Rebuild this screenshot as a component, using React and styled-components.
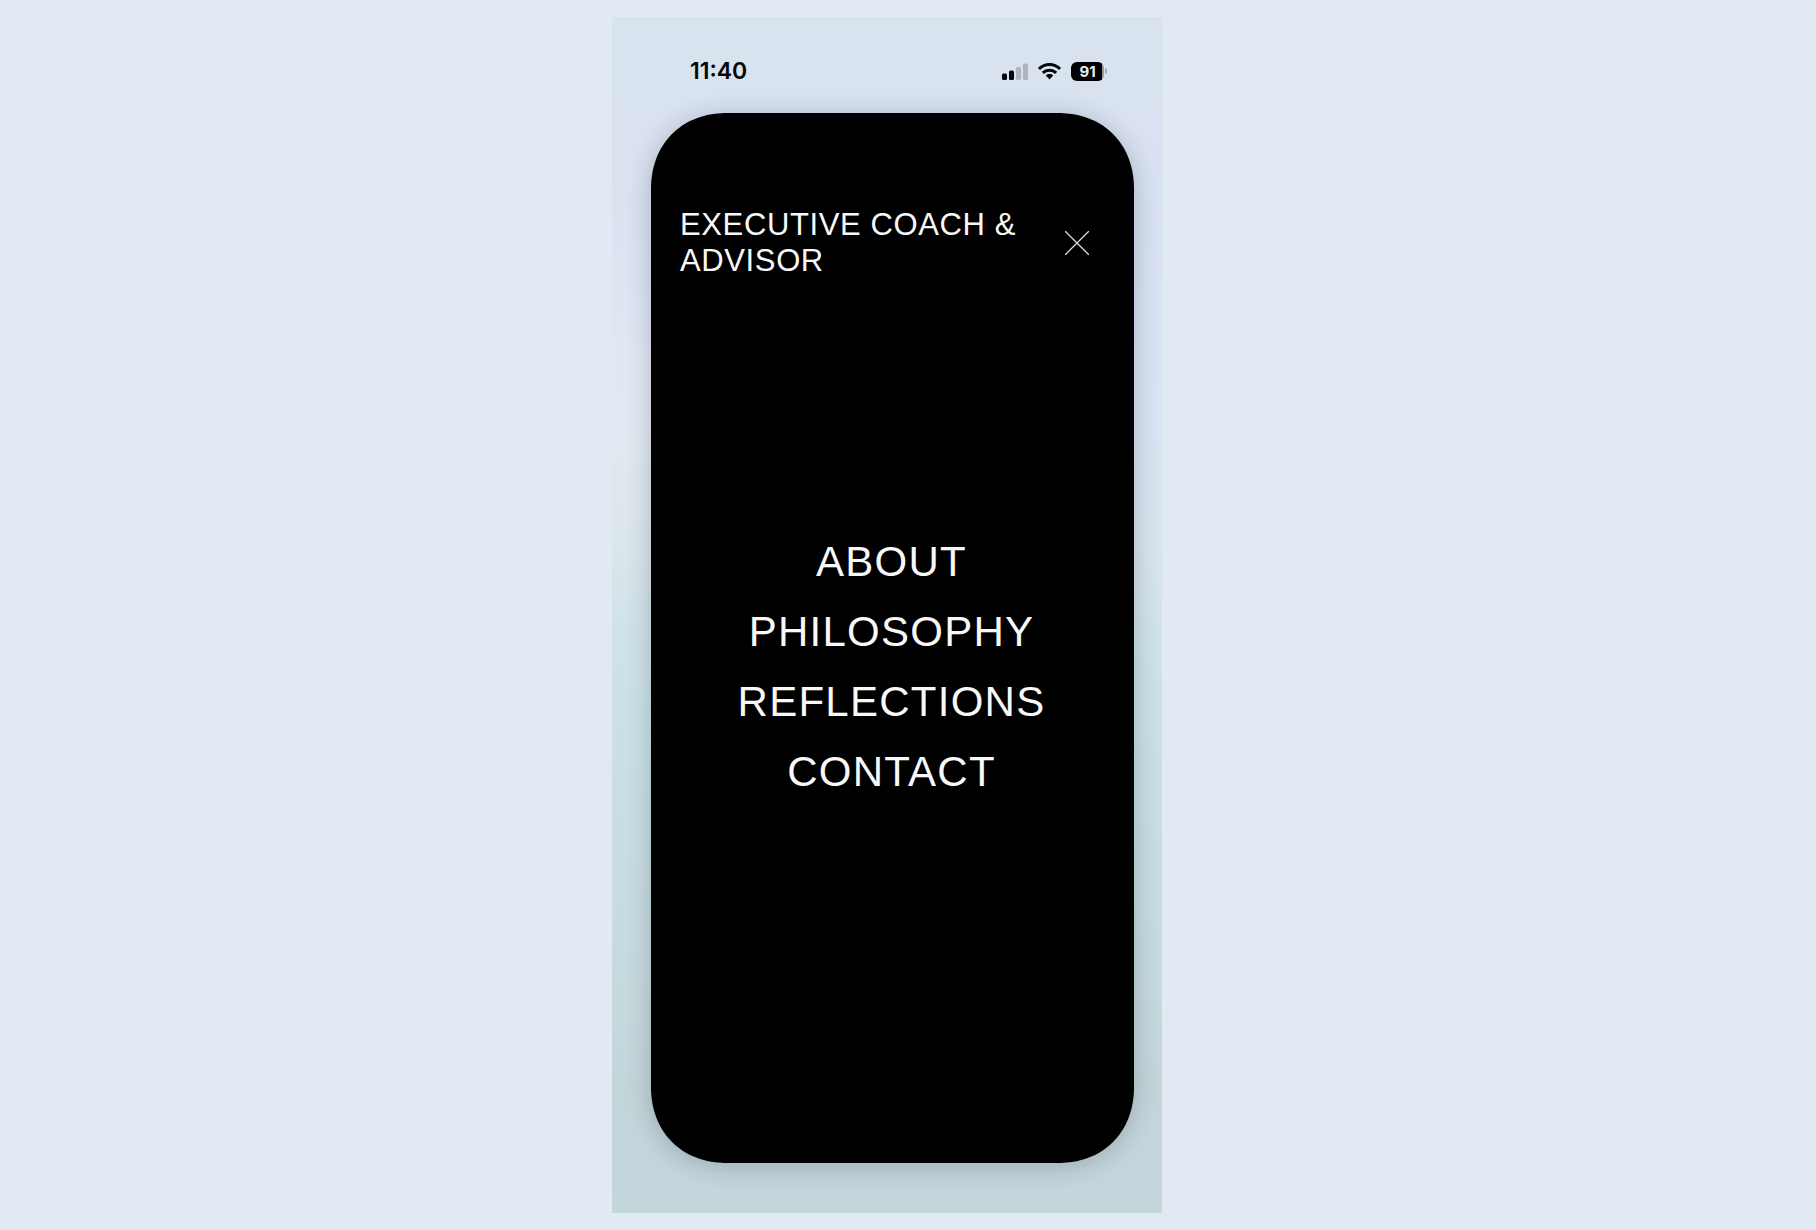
import React from "react";
import styled, { createGlobalStyle } from "styled-components";

const GlobalStyle = createGlobalStyle`
  *, *::before, *::after { box-sizing: border-box; }
  body {
    margin: 0;
    background: #e1e9f3;
    font-family: "Liberation Sans", Arial, sans-serif;
  }
`;

const Stage = styled.div`
  min-height: 100vh;
  display: flex;
  justify-content: center;
  align-items: stretch;
  padding: 17px 42px 17px 0;
`;

const Phone = styled.div`
  display: flex;
  flex-direction: column;
  width: 100%;
  max-width: 550px;
  padding: 0 28px 50px 39px;
  background:
    linear-gradient(180deg, transparent 10%, rgba(212, 224, 242, 0.6) 50%, rgba(212, 224, 242, 0.6) 75%, transparent 100%) right top / 50% 52% no-repeat,
    linear-gradient(
      180deg,
      #d9e2ef 0%,
      #dbe2f1 18%,
      #e1e7f3 28%,
      #e2e9f2 34%,
      #dbe6ea 44%,
      #cfe2e9 52%,
      #cae0e6 60%,
      #c6dbdf 78%,
      #c4d5da 90%,
      #c3d6da 100%
    );
`;

const StatusBar = styled.div`
  display: flex;
  align-items: center;
  justify-content: space-between;
  height: 96px;
  padding: 12px 27px 0 39px;
  color: #060709;
`;

const Time = styled.time`
  font: 600 23px/28px Inter, sans-serif;
`;

const Indicators = styled.div`
  display: flex;
  align-items: center;
  gap: 10px;
`;

const Battery = styled.div`
  display: flex;
  align-items: center;
  gap: 1px;
`;

const BatteryBody = styled.div`
  width: 33px;
  height: 19px;
  border-radius: 6px;
  background: linear-gradient(90deg, #000 31px, #94989f 31px);
  color: #e6ebf6;
  font: 700 15px/19px Inter, sans-serif;
  text-align: center;
`;

const BatteryTip = styled.div`
  width: 2px;
  height: 6px;
  border-radius: 0 2px 2px 0;
  background: #a3a8b3;
`;

const Card = styled.main`
  flex: 1;
  display: flex;
  flex-direction: column;
  padding: 94px 45px 108px 29px;
  border-radius: 70px;
  background: #000;
  color: #f8f8f8;
  box-shadow: 0 3px 24px rgba(20, 30, 50, 0.24);

  @supports (corner-shape: squircle) {
    border-radius: 76px;
    corner-shape: superellipse(1.1);
  }
`;

const Header = styled.header`
  display: flex;
  align-items: center;
  justify-content: space-between;
  gap: 24px;
`;

const Title = styled.h1`
  margin: 0;
  font-size: 31px;
  line-height: 36px;
  font-weight: 400;
  letter-spacing: 0.02em;
  text-transform: uppercase;
`;

const CloseButton = styled.button`
  flex: none;
  display: flex;
  width: 24px;
  height: 24px;
  padding: 0;
  border: 0;
  background: none;
  color: #dcdfdc;
  cursor: pointer;
`;

const Nav = styled.nav`
  flex: 1;
  display: flex;
  align-items: center;
  justify-content: center;
  padding-left: 14px;
`;

const NavList = styled.ul`
  margin: 0;
  padding: 0;
  list-style: none;
  text-align: center;
`;

const NavLink = styled.a`
  display: block;
  font-size: 42px;
  line-height: 70px;
  letter-spacing: 0.03em;
  text-transform: uppercase;
  text-decoration: none;
  color: inherit;
`;

const links = ["About", "Philosophy", "Reflections", "Contact"];

function SignalIcon() {
  return (
    <svg width="26" height="17" viewBox="0 0 26 17" role="img" aria-label="Signal strength">
      <rect x="0" y="10.500" width="5" height="6.500" rx="1.500" fill="#060709" />
      <rect x="7" y="7.500" width="5" height="9.500" rx="1.500" fill="#060709" />
      <rect x="14" y="4" width="5" height="13" rx="1.500" fill="#afb4c0" />
      <rect x="21" y="0.500" width="5" height="16.500" rx="1.500" fill="#afb4c0" />
    </svg>
  );
}

function WifiIcon() {
  return (
    <svg width="23" height="17" viewBox="0 0 23 17" role="img" aria-label="Wi-Fi">
      <g fill="none" stroke="#060709" strokeWidth="3">
        <path d="M1 5.900A15 15 0 0 1 22 5.900" />
        <path d="M4.800 9.900A9.700 9.700 0 0 1 18.200 9.900" />
      </g>
      <path d="M11.500 11c1.500 0 2.800.5 3.700 1.400L11.500 16.600 7.800 12.400c.9-.9 2.200-1.400 3.700-1.400z" fill="#060709" />
    </svg>
  );
}

export default function App() {
  return (
    <>
      <GlobalStyle />
      <Stage>
        <Phone>
          <StatusBar>
            <Time>11:40</Time>
            <Indicators>
              <SignalIcon />
              <WifiIcon />
              <Battery>
                <BatteryBody>91</BatteryBody>
                <BatteryTip />
              </Battery>
            </Indicators>
          </StatusBar>
          <Card>
            <Header>
              <Title>Executive Coach &amp; Advisor</Title>
              <CloseButton type="button" aria-label="Close menu">
                <svg width="24" height="24" viewBox="0 0 24 24" fill="none" stroke="currentColor" strokeWidth="1.300">
                  <path d="M0 0L24 24M24 0L0 24" />
                </svg>
              </CloseButton>
            </Header>
            <Nav aria-label="Main">
              <NavList>
                {links.map((label) => (
                  <li key={label}>
                    <NavLink href={`#${label.toLowerCase()}`}>{label}</NavLink>
                  </li>
                ))}
              </NavList>
            </Nav>
          </Card>
        </Phone>
      </Stage>
    </>
  );
}
